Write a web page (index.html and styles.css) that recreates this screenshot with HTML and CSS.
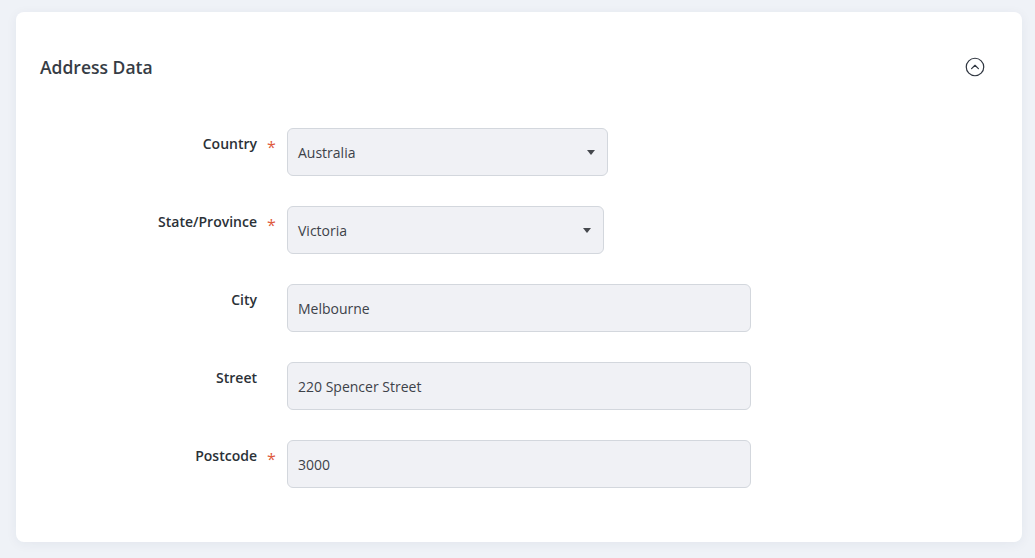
FILE: index.html
```html
<!DOCTYPE html>
<html lang="en">
<head>
    <meta charset="UTF-8">
    <meta name="viewport" content="width=device-width, initial-scale=1.0">
    <title>Address Data</title>
    <link rel="stylesheet" href="styles.css">
</head>
<body>

<div class="card">
    <div class="card-header">
        <h2>Address Data</h2>
        <button class="toggle" type="button" aria-label="Collapse">
            <svg width="20" height="20" viewBox="0 0 20 20">
                <circle cx="10" cy="10" r="8.75" fill="none" stroke="#2f3640" stroke-width="1.2"/>
                <path d="M6.6 11.6 L10 8.3 L13.4 11.6" fill="none" stroke="#2f3640" stroke-width="1.2" stroke-linecap="round" stroke-linejoin="round"/>
            </svg>
        </button>
    </div>

    <div class="form">
        <div class="row">
            <label class="label" for="country">Country</label>
            <span class="req">*</span>
            <div class="select select-country">
                <span id="country">Australia</span>
                <span class="caret"></span>
            </div>
        </div>
        <div class="row">
            <label class="label" for="state">State/Province</label>
            <span class="req">*</span>
            <div class="select select-state">
                <span id="state">Victoria</span>
                <span class="caret"></span>
            </div>
        </div>
        <div class="row">
            <label class="label" for="city">City</label>
            <span class="req"></span>
            <input type="text" id="city" class="field" value="Melbourne">
        </div>
        <div class="row">
            <label class="label" for="street">Street</label>
            <span class="req"></span>
            <input type="text" id="street" class="field" value="220 Spencer Street">
        </div>
        <div class="row">
            <label class="label" for="postcode">Postcode</label>
            <span class="req">*</span>
            <input type="text" id="postcode" class="field" value="3000">
        </div>
    </div>
</div>

</body>
</html>
```

FILE: styles.css
```css
body {
    font-family: 'Open Sans', 'Noto Sans', sans-serif;
    background-color: #eff2f7;
    margin: 0;
    padding: 12px 13px 16px 16px;
}
.card {
    background: white;
    border-radius: 8px;
    box-shadow: 0 2px 12px rgba(30, 50, 90, 0.06);
    padding: 0 0 54px 0;
}
.card-header {
    display: flex;
    align-items: center;
    justify-content: space-between;
    padding: 43px 37px 49px 24px;
}
h2 {
    margin: 0;
    font-size: 17.5px;
    line-height: 24px;
    font-weight: 600;
    color: #363c45;
}
.toggle {
    background: none;
    border: none;
    padding: 0;
    width: 20px;
    height: 20px;
    cursor: pointer;
}
.toggle svg {
    display: block;
}
.form {
    display: flex;
    flex-direction: column;
    gap: 30px;
}
.row {
    display: flex;
    align-items: flex-start;
}
.label {
    width: 241px;
    text-align: right;
    font-size: 14px;
    line-height: 20px;
    font-weight: 600;
    color: #2b3137;
    padding-top: 6px;
}
.req {
    width: 30px;
    padding-top: 9px;
    padding-left: 10px;
    box-sizing: border-box;
    color: #de5a3c;
    font-size: 16px;
    line-height: 20px;
}
.select, .field {
    height: 48px;
    box-sizing: border-box;
    background-color: #f0f1f5;
    border: 1px solid #d3d7dd;
    border-radius: 6px;
    font-family: inherit;
    font-size: 14px;
    color: #3d4249;
    padding: 0 10px;
}
.select {
    display: flex;
    align-items: center;
    justify-content: space-between;
    padding-right: 12px;
}
.select-country {
    width: 321px;
}
.select-state {
    width: 317px;
}
.field {
    width: 464px;
    outline: none;
}
.caret {
    width: 0;
    height: 0;
    border-left: 4.5px solid transparent;
    border-right: 4.5px solid transparent;
    border-top: 5px solid #45484d;
}
```
